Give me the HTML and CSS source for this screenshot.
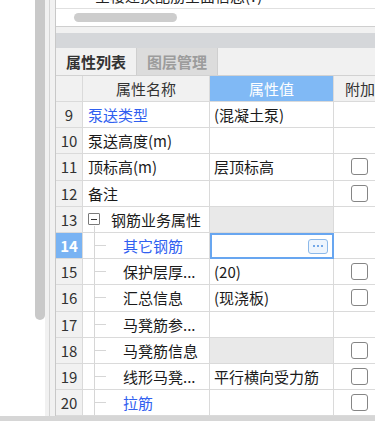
FILE: index.html
```html
<!DOCTYPE html>
<html lang="zh">
<head>
<meta charset="utf-8">
<link rel="stylesheet" href="styles.css">
</head>
<body>
<div class="app">
  <div class="gutter"></div>
  <div class="vscroll"><div class="thumb"></div></div>
  <div class="splitter"></div>
  <div class="main">
    <div class="toppane">
      <div class="topline"><span>全楼迁换配筋全面信息(?)</span></div>
      <div class="hscroll"><div class="hthumb"></div></div>
    </div>
    <div class="gap"></div>
    <div class="titlebar"></div>
    <div class="tabs">
      <div class="tab active">属性列表</div>
      <div class="tab">图层管理</div>
    </div>
    <div class="grid">
      <div class="c hdr"></div>
      <div class="c hdr">属性名称</div>
      <div class="c hdr val">属性值</div>
      <div class="c hdr extra">附加</div>

      <div class="c num">9</div>
      <div class="c name link">泵送类型</div>
      <div class="c value">(混凝土泵)</div>
      <div class="c ex"></div>

      <div class="c num">10</div>
      <div class="c name">泵送高度(m)</div>
      <div class="c value"></div>
      <div class="c ex"></div>

      <div class="c num">11</div>
      <div class="c name">顶标高(m)</div>
      <div class="c value">层顶标高</div>
      <div class="c ex"><span class="cb"></span></div>

      <div class="c num">12</div>
      <div class="c name">备注</div>
      <div class="c value"></div>
      <div class="c ex"><span class="cb"></span></div>

      <div class="c num">13</div>
      <div class="c name group"><span class="toggle"></span>钢筋业务属性</div>
      <div class="c value shade"></div>
      <div class="c ex"></div>

      <div class="c num sel">14</div>
      <div class="c name child link"><span class="branch"></span>其它钢筋</div>
      <div class="c value editing"><span class="more"><i></i><i></i><i></i></span></div>
      <div class="c ex"></div>

      <div class="c num">15</div>
      <div class="c name child"><span class="branch"></span>保护层厚...</div>
      <div class="c value">(20)</div>
      <div class="c ex"><span class="cb"></span></div>

      <div class="c num">16</div>
      <div class="c name child"><span class="branch"></span>汇总信息</div>
      <div class="c value">(现浇板)</div>
      <div class="c ex"><span class="cb"></span></div>

      <div class="c num">17</div>
      <div class="c name child"><span class="branch"></span>马凳筋参...</div>
      <div class="c value"></div>
      <div class="c ex"></div>

      <div class="c num">18</div>
      <div class="c name child"><span class="branch"></span>马凳筋信息</div>
      <div class="c value shade"></div>
      <div class="c ex"><span class="cb"></span></div>

      <div class="c num">19</div>
      <div class="c name child"><span class="branch"></span>线形马凳...</div>
      <div class="c value">平行横向受力筋</div>
      <div class="c ex"><span class="cb"></span></div>

      <div class="c num">20</div>
      <div class="c name child link"><span class="branch"></span>拉筋</div>
      <div class="c value"></div>
      <div class="c ex"><span class="cb"></span></div>
    </div>
  </div>
</div>
<div class="bottombar"></div>
</body>
</html>
```

FILE: styles.css
```css
* { box-sizing: border-box; }
html, body { margin: 0; padding: 0; }
body {
  width: 375px;
  height: 421px;
  overflow: hidden;
  background: #fff;
  font-family: "Noto Sans CJK SC", "Noto Sans", sans-serif;
  font-size: 15px;
  color: #1a1a1a;
}
.app { display: flex; height: 416px; overflow: hidden; }
.gutter { width: 35px; flex: none; }
.vscroll { width: 10px; flex: none; }
.thumb { height: 320px; background: #c9c9c9; border-radius: 0 0 5px 5px; }
.splitter {
  width: 11px; flex: none; display: flex;
  background: #f1f1f1; border-right: 1px solid #c8c8c8;
}
.splitter::before { content: ""; width: 1px; margin-left: 4px; background: #d4d4d4; }
.main { flex: 1; min-width: 0; display: flex; flex-direction: column; overflow: hidden; }

.toppane { height: 27px; flex: none; border-bottom: 1px solid #cfcfcf; overflow: hidden; }
.topline { height: 9px; border-bottom: 1px solid #e0e0e0; overflow: hidden; }
.topline span { display: block; margin-top: -14px; padding-left: 39px; line-height: 20px; white-space: nowrap; color: #222; }
.hscroll { padding: 4px 0 0 18px; }
.hthumb { width: 103px; height: 9px; background: #cdcdcd; border-radius: 5px; }

.gap { height: 6px; flex: none; background: #f1f1f1; }
.titlebar { height: 15px; flex: none; background: #d5d7da; }
.tabs { height: 28px; flex: none; display: flex; background: #f1f1f1; border-bottom: 1px solid #d2d2d2; }
.tab {
  width: 81px; display: flex; align-items: center; justify-content: center;
  background: #dcdcdc; color: #9c9c9c; font-weight: bold;
  border-right: 1px solid #cfcfcf;
}
.tab.active { background: #f1f1f1; color: #333; }

.grid {
  display: grid;
  grid-template-columns: 27px 127px 124px 41px;
  grid-template-rows: 26px;
  grid-auto-rows: 26.2px;
  flex: none;
}
.c {
  display: flex; align-items: center; white-space: nowrap; overflow: hidden;
  border-right: 1px solid #dadada; border-bottom: 1px solid #dadada;
  position: relative;
}
.ex, .extra { border-right: none; }
.hdr { background: #f1f1f1; justify-content: center; color: #333; }
.hdr.val { background: #80b9f5; color: #fff; }
.hdr.extra { justify-content: flex-start; padding-left: 11px; }
.num { background: #f1f1f1; justify-content: center; color: #333; }
.num.sel { background: #79b3f3; color: #fff; font-weight: bold; }
.name { padding-left: 5px; }
.value { padding-left: 4px; }
.shade { background: #e9e9e9; }
.link { color: #3060f0; }

.toggle {
  width: 12px; height: 12px; flex: none; margin-right: 11px;
  border: 1px solid #7a7a7a; border-radius: 1px; background: #fff;
  display: flex; align-items: center; justify-content: center;
}
.toggle::before { content: ""; width: 6px; height: 1px; background: #333; }
.group::after {
  content: ""; position: absolute; left: 11px; top: 19px; bottom: 0;
  border-left: 1px solid #d6d6d6;
}
.child { padding-left: 0; }
.branch {
  align-self: stretch; flex: none; width: 12px; margin-left: 11px; margin-right: 17px;
  border-left: 1px solid #d6d6d6;
  background: linear-gradient(#d6d6d6, #d6d6d6) center / 100% 1px no-repeat;
}

.editing {
  border: 2px solid #68a6f0;
  justify-content: flex-end;
  padding-right: 4px;
}
.more {
  width: 20px; height: 15px; border: 1px solid #8cb9ea; border-radius: 3px;
  background: #eef5fd; display: flex; align-items: center; justify-content: center; gap: 2px;
}
.more i { width: 2px; height: 2px; background: #4a8ee0; border-radius: 1px; }

.ex { padding-left: 17px; }
.cb {
  width: 17px; height: 17px; border: 1.5px solid #858585; border-radius: 3px; background: #fff;
}
.bottombar { height: 5px; background: #d6d6d6; }
```
